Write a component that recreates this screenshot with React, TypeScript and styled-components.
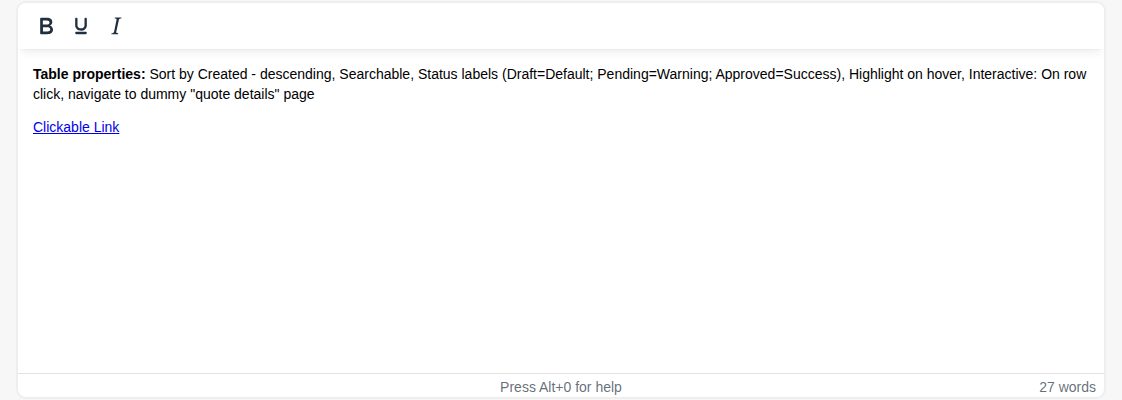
import React from "react";
import styled, { createGlobalStyle } from "styled-components";

const Global = createGlobalStyle`
  html, body { margin: 0; padding: 0; background: #f7f7f7; }
  body { font-family: "Liberation Sans", Arial, sans-serif; }
`;

const Page = styled.div`
  padding: 1px 16px 0 16px;
  height: 400px;
  box-sizing: border-box;
`;

const Editor = styled.div`
  height: 398px;
  box-sizing: border-box;
  border: 2px solid #eeeeee;
  border-radius: 10px;
  background: #fff;
  display: flex;
  flex-direction: column;
  overflow: hidden;
`;

const Toolbar = styled.div`
  height: 46px;
  flex: none;
  display: flex;
  align-items: center;
  padding: 0 0 0 11px;
  gap: 1px;
  background: #fff;
  box-shadow: 0 2px 2px -2px rgba(34, 47, 62, 0.1), 0 8px 8px -4px rgba(34, 47, 62, 0.07);
  position: relative;
  z-index: 1;
`;

const ToolButton = styled.button`
  width: 34px;
  height: 34px;
  border: 0;
  border-radius: 3px;
  background: transparent;
  padding: 0;
  display: flex;
  align-items: center;
  justify-content: center;
  color: #222f3e;
  cursor: pointer;
  svg { width: 28px; height: 28px; fill: currentColor; }
`;

const Content = styled.div`
  flex: 1;
  padding: 0 15px;
  font-size: 14px;
  line-height: 20px;
  color: #000;
  overflow: hidden;
`;

const Para = styled.p`
  margin: 13px 0;
  &:first-child { margin-top: 15px; }
`;

const Link = styled.a`
  color: #0000ee;
  text-decoration: underline;
`;

const StatusBar = styled.div`
  flex: none;
  height: 24px;
  border-top: 1px solid #e3e3e3;
  display: grid;
  grid-template-columns: 1fr auto 1fr;
  align-items: center;
  padding: 3px 8px 0 8px;
  box-sizing: border-box;
  font-size: 14px;
  line-height: 18px;
  color: rgba(34, 47, 62, 0.7);
`;

const Help = styled.span`
  grid-column: 2;
`;

const Words = styled.span`
  grid-column: 3;
  justify-self: end;
`;

export default function App() {
  return (
    <>
      <Global />
      <Page>
        <Editor>
          <Toolbar>
            <ToolButton aria-label="Bold">
              <svg viewBox="0 0 24 24">
                <path d="M7.8 19c-.3 0-.5 0-.6-.2l-.2-.5V5.7c0-.2 0-.4.2-.5l.6-.2h5c1.5 0 2.7.3 3.5 1 .7.6 1.1 1.4 1.1 2.5a3 3 0 0 1-.6 1.9c-.4.6-1 1-1.6 1.2.4.1.9.3 1.3.6s.8.7 1 1.2c.4.4.5 1 .5 1.6 0 1.3-.4 2.3-1.3 3-.8.7-2.1 1-3.8 1H7.8Zm5-8.3c.6 0 1.2-.1 1.6-.5.4-.3.6-.7.6-1.3 0-1.1-.8-1.7-2.3-1.7H9.3v3.5h3.4Zm.5 6c.7 0 1.3-.1 1.7-.4.4-.4.6-.9.6-1.5s-.2-1-.7-1.4c-.4-.3-1-.4-2-.4H9.4v3.8h4Z" />
              </svg>
            </ToolButton>
            <ToolButton aria-label="Underline">
              <svg viewBox="0 0 24 24">
                <path d="M16 5c.6 0 1 .4 1 1v5.5a4 4 0 0 1-.4 1.8l-1 1.4a5.3 5.3 0 0 1-5.5 1 5 5 0 0 1-1.6-1c-.5-.4-.8-.9-1.1-1.4a4 4 0 0 1-.4-1.8V6c0-.6.4-1 1-1s1 .4 1 1v5.5c0 .3 0 .6.2 1l.6.7a3.3 3.3 0 0 0 2.2.8 3.4 3.4 0 0 0 2.2-.8c.3-.2.4-.5.6-.8l.2-.9V6c0-.6.4-1 1-1ZM8 17h8c.6 0 1 .4 1 1s-.4 1-1 1H8a1 1 0 0 1 0-2Z" />
              </svg>
            </ToolButton>
            <ToolButton aria-label="Italic">
              <svg viewBox="0 0 24 24">
                <path d="m16.7 4.7-.1.9h-.3c-.6 0-1 0-1.4.3-.3.3-.4.6-.5 1.1l-2.1 9.8v.6c0 .5.4.8 1.4.8h.2l-.2.8H8l.2-.8h.2c1.1 0 1.8-.5 2-1.5l2-9.8.1-.5c0-.6-.4-.8-1.4-.8h-.3l.2-.9h5.8Z" />
              </svg>
            </ToolButton>
          </Toolbar>
          <Content>
            <Para>
              <strong>Table properties:</strong> Sort by Created - descending, Searchable, Status labels (Draft=Default; Pending=Warning; Approved=Success), Highlight on hover, Interactive: On row click, navigate to dummy "quote details" page
            </Para>
            <Para>
              <Link href="#">Clickable Link</Link>
            </Para>
          </Content>
          <StatusBar>
            <Help>Press Alt+0 for help</Help>
            <Words>27 words</Words>
          </StatusBar>
        </Editor>
      </Page>
    </>
  );
}
